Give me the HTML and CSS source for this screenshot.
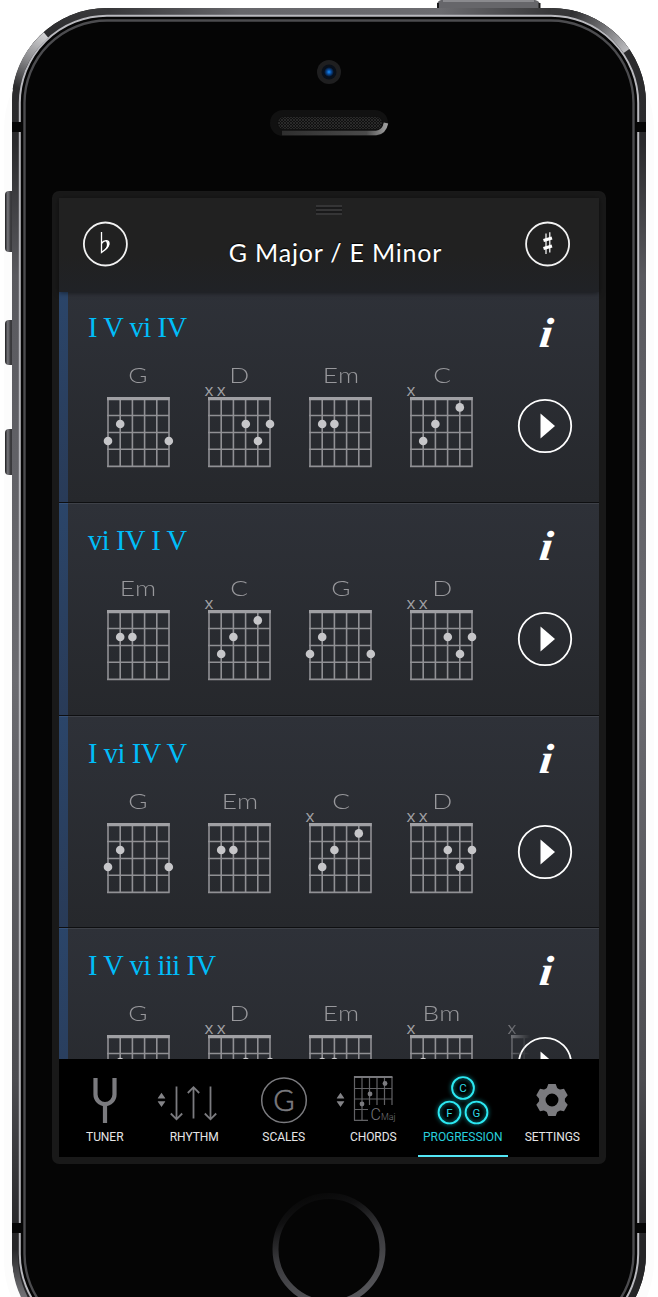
FILE: index.html
```html
<!DOCTYPE html>
<html lang="en">
<head>
<meta charset="utf-8">
<title>Chord progressions</title>
<link rel="stylesheet" href="styles.css">
</head>
<body>
<svg class="defs" width="0" height="0" aria-hidden="true">
  <defs>
    <symbol id="grid" viewBox="0 0 80 86">
      <path class="strings" d="M9 13V82.5M21.2 13V82.5M33.4 13V82.5M45.6 13V82.5M57.8 13V82.5M70 13V82.5M8 31.5H70.7M8 48.5H70.7M8 65.3H70.7M8 82.4H70.7"/>
      <path class="nut" d="M8 14.6H70.7"/>
    </symbol>
    <symbol id="chord-g" viewBox="0 0 80 86">
      <use href="#grid" width="80" height="86"/>
      <g class="dots"><circle cx="21.2" cy="40" r="4.3"/><circle cx="9" cy="57" r="4.3"/><circle cx="69.8" cy="57" r="4.3"/></g>
    </symbol>
    <symbol id="chord-d" viewBox="0 0 80 86">
      <use href="#grid" width="80" height="86"/>
      <text class="mute" x="9" y="12">x</text><text class="mute" x="21.2" y="12">x</text>
      <g class="dots"><circle cx="45.8" cy="40" r="4.3"/><circle cx="70" cy="40" r="4.3"/><circle cx="58" cy="57" r="4.3"/></g>
    </symbol>
    <symbol id="chord-em" viewBox="0 0 80 86">
      <use href="#grid" width="80" height="86"/>
      <g class="dots"><circle cx="21.2" cy="40" r="4.3"/><circle cx="33.4" cy="40" r="4.3"/></g>
    </symbol>
    <symbol id="chord-c" viewBox="0 0 80 86">
      <use href="#grid" width="80" height="86"/>
      <text class="mute" x="9" y="12">x</text>
      <g class="dots"><circle cx="57.8" cy="23.4" r="4.3"/><circle cx="33.4" cy="40" r="4.3"/><circle cx="21.2" cy="57" r="4.3"/></g>
    </symbol>
    <symbol id="chord-bm" viewBox="0 0 80 86">
      <use href="#grid" width="80" height="86"/>
      <text class="mute" x="9" y="12">x</text>
      <g class="dots"><circle cx="21.2" cy="40" r="4.3"/></g>
    </symbol>
    <symbol id="play" viewBox="0 0 56 56">
      <circle cx="28" cy="28" r="26.2" fill="none" stroke="#fff" stroke-width="1.8"/>
      <path d="M23.5 15.5 38 28 23.5 40.5Z" fill="#fff"/>
    </symbol>
    <symbol id="sorter" viewBox="0 0 8 16">
      <path d="M0 6.6 4 .8 8 6.6ZM0 9.2H8L4 15Z" fill="#838387"/>
    </symbol>
  </defs>
</svg>

<div class="stage">
  <svg class="phone" viewBox="0 0 658 1297" width="658" height="1297" aria-hidden="true">
    <defs>
      <linearGradient id="rim" gradientUnits="userSpaceOnUse" x1="0" y1="8" x2="0" y2="1349">
        <stop offset="0" stop-color="#39393b"/><stop offset=".02" stop-color="#2b2b2d"/><stop offset=".1" stop-color="#2a2a2c"/>
        <stop offset=".2" stop-color="#59595e"/><stop offset=".5" stop-color="#6b6b70"/><stop offset=".8" stop-color="#4c4c50"/><stop offset=".92" stop-color="#252527"/>
      </linearGradient>
      <linearGradient id="rimEdge" gradientUnits="userSpaceOnUse" x1="107" y1="0" x2="551" y2="0">
        <stop offset="0" stop-color="#363638"/><stop offset=".3" stop-color="#66666a"/><stop offset=".75" stop-color="#6c6c70"/><stop offset="1" stop-color="#363638"/>
      </linearGradient>
      <linearGradient id="glintL" gradientUnits="userSpaceOnUse" x1="46" y1="35" x2="18" y2="88">
        <stop offset="0" stop-color="#d2d2d4"/><stop offset=".5" stop-color="#8a8a8d"/><stop offset="1" stop-color="#2c2c2e"/>
      </linearGradient>
      <linearGradient id="glintR" gradientUnits="userSpaceOnUse" x1="572" y1="14" x2="627" y2="51">
        <stop offset="0" stop-color="#303032"/><stop offset=".5" stop-color="#6f6f72"/><stop offset="1" stop-color="#bdbdc0"/>
      </linearGradient>
      <linearGradient id="glintB" gradientUnits="userSpaceOnUse" x1="0" y1="1250" x2="0" y2="1300">
        <stop offset="0" stop-color="#2a2a2c"/><stop offset="1" stop-color="#77777b"/>
      </linearGradient>
      <linearGradient id="key" x1="0" y1="0" x2="1" y2="0">
        <stop offset="0" stop-color="#1c1c1e"/><stop offset=".2" stop-color="#77777c"/><stop offset=".4" stop-color="#3a3a3d"/><stop offset="1" stop-color="#29292b"/>
      </linearGradient>
      <linearGradient id="home" x1=".2" y1="0" x2=".5" y2="1">
        <stop offset="0" stop-color="#070707"/><stop offset=".2" stop-color="#101011"/><stop offset=".5" stop-color="#38383b"/><stop offset="1" stop-color="#56565a"/>
      </linearGradient>
      <linearGradient id="lip" gradientUnits="userSpaceOnUse" x1="280" y1="0" x2="388" y2="0">
        <stop offset="0" stop-color="#2e2e2e"/><stop offset=".8" stop-color="#4b4b4b"/><stop offset="1" stop-color="#a5a5a5"/>
      </linearGradient>
      <radialGradient id="lens"><stop offset="0" stop-color="#1590ff"/><stop offset=".45" stop-color="#0a4a98"/><stop offset="1" stop-color="#050c18"/></radialGradient>
      <pattern id="mesh" width="3" height="3" patternUnits="userSpaceOnUse"><path d="M0 0 3 3M3 0 0 3" stroke="#343434" stroke-width=".7"/></pattern>
    </defs>
    <rect x="4" y="30" width="650" height="1330" rx="100" fill="#fcfcfc"/>
    <path d="M437 12V5Q437 1 441 0H535Q540 1 540 5V12Z" fill="#66666a"/>
    <path d="M438 8V3M539.500 8V3" stroke="#1a1a1b" stroke-width="2"/>
    <path d="M443 1H534" stroke="#8a8a8e" stroke-width="2"/>
    <rect x="5" y="191" width="14" height="61" rx="4" fill="url(#key)"/>
    <rect x="5" y="320" width="14" height="45" rx="4" fill="url(#key)"/>
    <rect x="5" y="429" width="14" height="46" rx="4" fill="url(#key)"/>
    <rect x="12" y="8" width="634" height="1341" rx="95" fill="#111"/>
    <rect x="15.500" y="11.500" width="627" height="1334" rx="91.500" fill="none" stroke="url(#rim)" stroke-width="7"/>
    <path d="M107 8H551V15H107Z" fill="url(#rimEdge)"/>
    <path d="M46 35A91.500 91.500 0 0 0 16 90" fill="none" stroke="url(#glintL)" stroke-width="7"/>
    <path d="M570 13.500A91.500 91.500 0 0 1 626.500 51" fill="none" stroke="url(#glintR)" stroke-width="7"/>
    <path d="M15.500 1250A92 92 0 0 0 28 1304" fill="none" stroke="url(#glintB)" stroke-width="6"/>
    <rect x="19.800" y="15.800" width="618.400" height="1325.400" rx="87.200" fill="#050505" stroke="#b9b9be" stroke-width="2"/>
    <rect x="24.500" y="20.500" width="609" height="1316" rx="82.500" fill="#050505" stroke="#4c4c4f" stroke-width="2.400"/>
    <g fill="#060606"><rect x="12" y="122" width="9" height="10"/><rect x="637" y="122" width="9" height="10"/><rect x="12" y="1223" width="9" height="10"/><rect x="637" y="1223" width="9" height="10"/></g>
    <circle cx="329" cy="72" r="12" fill="#1f1f20"/><circle cx="329" cy="72" r="7.500" fill="#09101a"/><circle cx="329" cy="72" r="5" fill="url(#lens)"/>
    <rect x="270" y="110" width="118" height="26" rx="13" fill="#111"/>
    <path d="M282 133H376Q384 132.500 386 123" fill="none" stroke="url(#lip)" stroke-width="4.500"/>
    <rect x="277" y="116" width="106" height="14" rx="7" fill="#101010"/><rect x="278" y="117" width="104" height="12" rx="6" fill="url(#mesh)"/>
    <circle cx="329" cy="1249.500" r="53.500" fill="none" stroke="url(#home)" stroke-width="6"/>
  </svg>

  <main class="screen">
    <header class="header">
      <span class="handle"></span>
      <svg class="key-button" viewBox="0 0 46 46">
        <circle class="key-ring" cx="23.400" cy="23" r="21.500"/>
        <path d="M19.500 11V31.500C24 28.500 27.500 25.500 27 22C26.500 18.700 22 19 19.500 22.500" fill="none" stroke="#fff" stroke-width="1.300"/>
        <path d="M23.500 20C27 19.500 28.500 23 26 26.200L22 30C25 26.500 26 22.500 23.500 20Z" fill="#fff"/>
      </svg>
      <h1 class="title">G Major / E Minor</h1>
      <svg class="key-button" viewBox="0 0 46 46">
        <circle class="key-ring" cx="22.600" cy="23" r="21.500"/>
        <path d="M21 12.500V33M24.800 11.200V31.500" stroke="#fff" stroke-width="1.200"/>
        <path d="M18.500 19.500 27 17M18.500 27.500 27 25" stroke="#fff" stroke-width="3.200"/>
      </svg>
    </header>

    <div class="list">
      <section class="progression">
        <div class="top"><h2 class="numerals">I V vi IV</h2><span class="info">i</span></div>
        <div class="chords">
          <div class="chord"><span class="name">G</span><svg class="diagram"><use href="#chord-g"/></svg></div>
          <div class="chord"><span class="name">D</span><svg class="diagram"><use href="#chord-d"/></svg></div>
          <div class="chord"><span class="name">Em</span><svg class="diagram"><use href="#chord-em"/></svg></div>
          <div class="chord"><span class="name">C</span><svg class="diagram"><use href="#chord-c"/></svg></div>
          <svg class="play"><use href="#play"/></svg>
        </div>
      </section>
      <section class="progression">
        <div class="top"><h2 class="numerals">vi IV I V</h2><span class="info">i</span></div>
        <div class="chords">
          <div class="chord"><span class="name">Em</span><svg class="diagram"><use href="#chord-em"/></svg></div>
          <div class="chord"><span class="name">C</span><svg class="diagram"><use href="#chord-c"/></svg></div>
          <div class="chord"><span class="name">G</span><svg class="diagram"><use href="#chord-g"/></svg></div>
          <div class="chord"><span class="name">D</span><svg class="diagram"><use href="#chord-d"/></svg></div>
          <svg class="play"><use href="#play"/></svg>
        </div>
      </section>
      <section class="progression">
        <div class="top"><h2 class="numerals">I vi IV V</h2><span class="info">i</span></div>
        <div class="chords">
          <div class="chord"><span class="name">G</span><svg class="diagram"><use href="#chord-g"/></svg></div>
          <div class="chord"><span class="name">Em</span><svg class="diagram"><use href="#chord-em"/></svg></div>
          <div class="chord"><span class="name">C</span><svg class="diagram"><use href="#chord-c"/></svg></div>
          <div class="chord"><span class="name">D</span><svg class="diagram"><use href="#chord-d"/></svg></div>
          <svg class="play"><use href="#play"/></svg>
        </div>
      </section>
      <section class="progression">
        <div class="top"><h2 class="numerals">I V vi iii IV</h2><span class="info">i</span></div>
        <div class="chords">
          <div class="chord"><span class="name">G</span><svg class="diagram"><use href="#chord-g"/></svg></div>
          <div class="chord"><span class="name">D</span><svg class="diagram"><use href="#chord-d"/></svg></div>
          <div class="chord"><span class="name">Em</span><svg class="diagram"><use href="#chord-em"/></svg></div>
          <div class="chord"><span class="name">Bm</span><svg class="diagram"><use href="#chord-bm"/></svg></div>
          <svg class="diagram next"><use href="#chord-c"/></svg>
          <svg class="play"><use href="#play"/></svg>
        </div>
      </section>
    </div>

    <nav class="tabs">
      <a class="tab">
        <svg class="icon" viewBox="0 0 90 52"><path d="M35.500 4V20.500a9.500 9.500 0 0 0 19 0V4M45 30V49" fill="none" stroke="#7b7b7f" stroke-width="4.200"/></svg>
        <span class="label">TUNER</span>
      </a>
      <a class="tab">
        <svg class="icon" viewBox="0 0 90 52"><use href="#sorter" x="8.500" y="18" width="8" height="16"/><path d="M22.500 12.500V45M16.800 39.500 22.500 45.300 28.200 39.500M39.500 44.500V13M33.800 19 39.500 13.200 45.200 19M56.500 12.500V45M50.800 39.500 56.500 45.300 62.200 39.500" transform="translate(5 0)" fill="none" stroke="#7b7b7f" stroke-width="1.800"/></svg>
        <span class="label">RHYTHM</span>
      </a>
      <a class="tab">
        <svg class="icon" viewBox="0 0 90 52"><circle cx="45" cy="26.200" r="22.300" fill="none" stroke="#7b7b7f" stroke-width="1.500"/><text class="scale-letter" x="45" y="36.600">G</text></svg>
        <span class="label">SCALES</span>
      </a>
      <a class="tab">
        <svg class="icon" viewBox="0 0 90 52">
          <use href="#sorter" x="8.500" y="18" width="8" height="16"/>
          <path d="M26.500 2V46.500M34 3V46.500M41.500 3V31M49 3V31M56.500 3V31M64 3V31M26 14.500H64.500M26 25H64.500M26 35.500H40M26 46.300H40" fill="none" stroke="#626265" stroke-width="1.200"/>
          <path d="M26 3H64.500" stroke="#77777b" stroke-width="2"/>
          <g fill="#7b7b7f"><circle cx="57" cy="9.500" r="2.400"/><circle cx="42" cy="20" r="2.400"/><circle cx="34" cy="30" r="2.400"/></g>
          <text class="chord-letter" x="42.500" y="46">C<tspan class="chord-quality">Maj</tspan></text>
        </svg>
        <span class="label">CHORDS</span>
      </a>
      <a class="tab active">
        <svg class="icon" viewBox="0 0 90 52">
          <g class="triad"><circle cx="45" cy="14" r="10.900"/><circle cx="31.500" cy="38.500" r="10.900"/><circle cx="58.500" cy="38.500" r="10.900"/></g>
          <g class="triad-letters"><text x="45" y="18">C</text><text x="31.500" y="42.500">F</text><text x="58.500" y="42.500">G</text></g>
        </svg>
        <span class="label">PROGRESSION</span>
      </a>
      <a class="tab">
        <svg class="icon" viewBox="0 0 90 52">
          <circle cx="45" cy="26" r="9.700" fill="none" stroke="#7b7b7f" stroke-width="6.500"/>
          <g fill="#7b7b7f">
            <path id="tooth" d="M39.500 14.800 41.300 10H48.700L50.500 14.800Z"/>
            <use href="#tooth" transform="rotate(60 45 26)"/><use href="#tooth" transform="rotate(120 45 26)"/><use href="#tooth" transform="rotate(180 45 26)"/><use href="#tooth" transform="rotate(240 45 26)"/><use href="#tooth" transform="rotate(300 45 26)"/>
          </g>
        </svg>
        <span class="label">SETTINGS</span>
      </a>
    </nav>
  </main>
</div>
</body>
</html>
```
FILE: styles.css
```css
* { box-sizing: border-box; }
body { margin: 0; background: #fff; overflow: hidden; }
.defs { display: block; position: absolute; }
.stage { position: relative; width: 658px; height: 1297px; padding: 191px 52px 0; overflow: hidden; }
.phone { position: absolute; left: 0; top: 0; }

.screen {
  position: relative;
  display: flex;
  flex-direction: column;
  width: 554px;
  height: 973px;
  border: 7px solid #191919;
  border-radius: 7px;
  background: #000;
}

.header {
  position: relative;
  z-index: 1;
  flex: none;
  display: flex;
  justify-content: space-between;
  align-items: center;
  height: 94px;
  padding: 0 28px 2px 23px;
  background: linear-gradient(#212121 60%, #202226);
  box-shadow: 0 1px 5px rgba(0, 0, 0, .5);
}
.handle {
  position: absolute;
  left: 257px;
  top: 7px;
  width: 26px;
  height: 10px;
  background: repeating-linear-gradient(#353536 0 2px, #19191a 2px 4px);
}
.key-button { width: 46px; height: 46px; }
.key-ring { fill: none; stroke: #f2f2f2; stroke-width: 1.8; }
.title { margin: 15px 0 0 18px; font: 400 25px/30px Lato, sans-serif; letter-spacing: .8px; color: #fff; white-space: nowrap; text-shadow: 0 -1px 1px #000; }

.list { flex: none; height: 767px; overflow: hidden; }
.progression {
  height: 212.75px;
  padding-left: 29px;
  border-bottom: 1px solid #0e0f11;
  background:
    linear-gradient(90deg, #36527a 9px, #3e4148 9px) 0 0 / 100% 1px no-repeat,
    linear-gradient(#2b4569, #293b58) 0 0 / 9px 100% no-repeat,
    linear-gradient(#2e3138, #26282c);
}
.progression:first-child {
  height: 210.75px;
  background:
    linear-gradient(#2b4569, #293b58) 0 0 / 9px 100% no-repeat,
    linear-gradient(#2e3138, #26282c);
}
.progression:first-child .top { height: 73px; padding-top: 18px; }
.top { display: flex; justify-content: space-between; height: 75px; padding: 20px 47px 0 0; }
.numerals { margin: 0; font: 400 28.5px/36px "Liberation Serif", serif; letter-spacing: -.45px; color: #00bdf9; white-space: nowrap; }
.info { font: italic bold 42px/46px "Liberation Serif", serif; color: #fff; transform: scaleX(1.12) skewX(-6deg); }

.chords { display: flex; }
.chord { flex: none; display: flex; flex-direction: column; align-items: center; width: 101.2px; }
.name { height: 19px; font: 300 21.5px/20px Lato, sans-serif; letter-spacing: .4px; color: #98989c; transform: scaleX(1.22); }
.diagram { flex: none; display: block; width: 80px; height: 86px; }
.strings { fill: none; stroke: #909094; stroke-width: 1.6; }
.nut { fill: none; stroke: #a0a0a4; stroke-width: 3.3; }
.dots { fill: #c6c6c9; }
.mute { font: 400 17px "Open Sans", sans-serif; fill: #a0a0a4; text-anchor: middle; }
.play { flex: none; width: 56px; height: 56px; margin: 33px 0 0 24px; }
.next { margin: 19px -90px 0 10.500px; -webkit-mask-image: linear-gradient(90deg, rgba(0,0,0,.6) 8px, transparent 27px); mask-image: linear-gradient(90deg, rgba(0,0,0,.6) 8px, transparent 27px); }

.tabs { flex: none; display: flex; height: 98px; padding: 0 2px 0 1px; background: #000; }
.tab { flex: 1 1 0; min-width: 0; display: flex; flex-direction: column; align-items: center; padding-top: 15px; border-bottom: 2px solid transparent; color: #e6e6e6; }
.icon { flex: none; width: 90px; height: 52px; overflow: visible; }
.label { margin-top: 3px; font: 400 12px/16px Roboto, sans-serif; letter-spacing: -.05px; }
.active { color: #28cfdc; border-color: #53e6f5; }
.scale-letter { font: 300 29px Lato, sans-serif; fill: #7b7b7f; text-anchor: middle; stroke: #7b7b7f; stroke-width: .6; }
.chord-letter { font: 300 16px Roboto, sans-serif; fill: #77777b; }
.chord-quality { font-size: 9px; }
.triad { fill: none; stroke: #2ce8f2; stroke-width: 1.9; filter: drop-shadow(0 0 2px #0aa0a8); }
.triad-letters { font: 400 11.5px Roboto, sans-serif; fill: #2cdbe6; text-anchor: middle; }
```
